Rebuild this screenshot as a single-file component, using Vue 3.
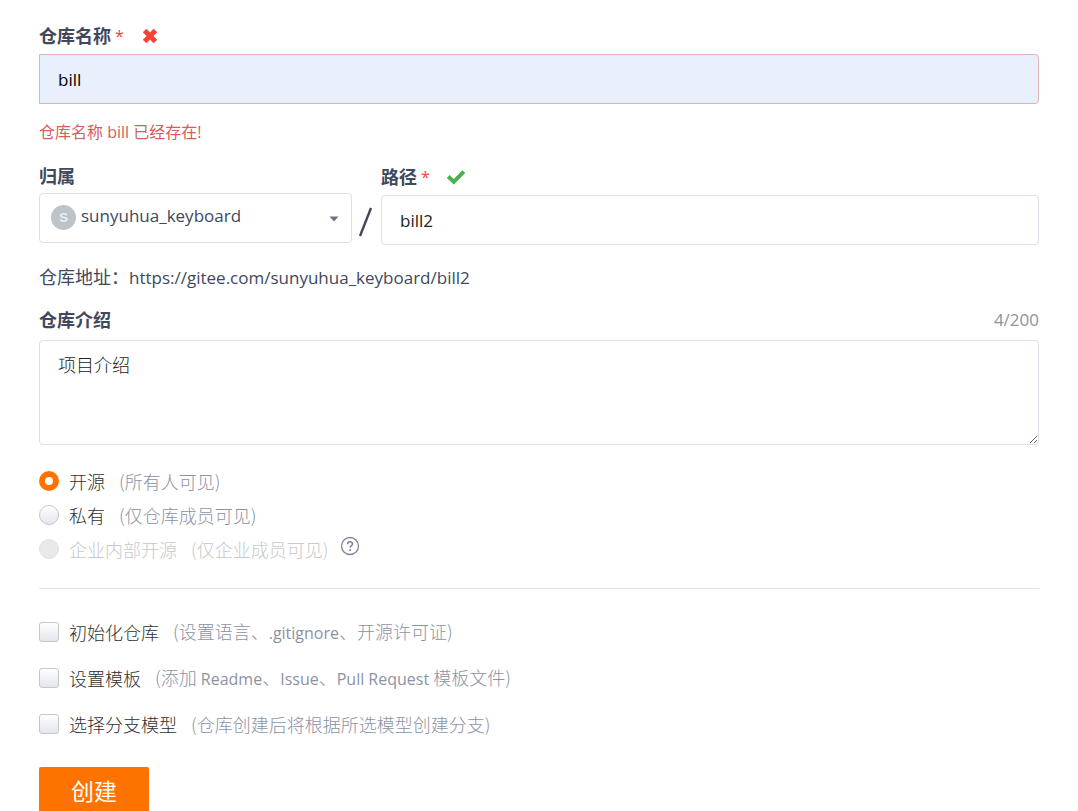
<script setup>
import { ref } from 'vue'

const name = ref('bill')
const owner = ref('sunyuhua_keyboard')
const path = ref('bill2')
const intro = ref('项目介绍')
const visibility = ref('public')
const picked = ref([])

const visibilities = [
  { value: 'public', label: '开源', hint: '(所有人可见)' },
  { value: 'private', label: '私有', hint: '(仅仓库成员可见)' },
  { value: 'inner', label: '企业内部开源', hint: '(仅企业成员可见)', disabled: true, help: true },
]
const options = [
  { value: 'init', label: '初始化仓库', hint: '(设置语言、.gitignore、开源许可证)' },
  { value: 'template', label: '设置模板', hint: '(添加 Readme、Issue、Pull Request 模板文件)' },
  { value: 'branch', label: '选择分支模型', hint: '(仓库创建后将根据所选模型创建分支)' },
]

// Splits a hint into runs so that Latin words can take their own type size.
const runs = (text) => text.split(/([ .A-Za-z]+)/).filter(Boolean)
const isLatin = (run) => /[A-Za-z]/.test(run)
</script>

<template>
  <form class="form" @submit.prevent>
    <div class="label-row">
      <label for="name">仓库名称</label>
      <span class="star">*</span>
      <svg class="status" viewBox="0 0 20 20" aria-hidden="true">
        <path d="M4.6 4.6 L15.4 15.4 M15.4 4.6 L4.6 15.4" stroke="#f44336" stroke-width="5" />
      </svg>
    </div>
    <input id="name" v-model="name" class="field invalid" type="text" />
    <p class="error">仓库名称 bill 已经存在!</p>

    <div class="location">
      <div class="owner">
        <div class="label-row short"><label for="owner">归属</label></div>
        <div class="select-box">
          <select id="owner" v-model="owner" class="field">
            <option>sunyuhua_keyboard</option>
          </select>
          <span class="avatar">S</span>
          <svg class="caret" viewBox="0 0 10 6" aria-hidden="true"><path d="M0.5 0.5H9.5L5 5.5Z" fill="#6b7385" /></svg>
        </div>
      </div>
      <svg class="slash" viewBox="0 0 16 32" aria-hidden="true"><path d="M2 30 L13 2" stroke="#40485b" stroke-width="2.4" /></svg>
      <div class="path">
        <div class="label-row">
          <label for="path">路径</label>
          <span class="star">*</span>
          <svg class="status" viewBox="0 0 20 20" aria-hidden="true">
            <path d="M2.2 9.5 L7.8 14.8 L17.8 4.6" fill="none" stroke="#4caf50" stroke-width="4" />
          </svg>
        </div>
        <input id="path" v-model="path" class="field" type="text" />
      </div>
    </div>

    <p class="address">仓库地址：<span class="url">https://gitee.com/{{ owner }}/{{ path }}</span></p>

    <div class="label-row intro-row">
      <label for="intro">仓库介绍</label>
      <span class="count">{{ intro.length }}/200</span>
    </div>
    <textarea id="intro" v-model="intro" class="field area"></textarea>

    <div class="radios">
      <div v-for="v in visibilities" :key="v.value" class="choice-row">
        <label class="choice" :class="{ disabled: v.disabled }">
          <input v-model="visibility" type="radio" name="visibility" :value="v.value" :disabled="v.disabled" />
          <span class="choice-text">{{ v.label }}</span>
          <span class="hint">{{ v.hint }}</span>
        </label>
        <svg v-if="v.help" class="help" viewBox="0 0 20 20" aria-hidden="true">
          <circle cx="10" cy="10" r="8.5" fill="none" stroke="#7d8597" stroke-width="1.3" />
          <path d="M7.6 8.2C7.6 5 12.5 5.1 12.5 7.9C12.5 9.6 10.1 9.8 10.1 11.8" fill="none" stroke="#7d8597" stroke-width="1.5" />
          <circle cx="10.1" cy="14" r="1" fill="#7d8597" />
        </svg>
      </div>
    </div>

    <hr />

    <div class="checks">
      <label v-for="o in options" :key="o.value" class="choice">
        <input v-model="picked" type="checkbox" :value="o.value" />
        <span class="choice-text">{{ o.label }}</span>
        <span class="hint"><span v-for="(run, i) in runs(o.hint)" :key="i" :class="{ latin: isLatin(run) }">{{ run }}</span></span>
      </label>
    </div>

    <button type="submit">创建</button>
  </form>
</template>

<style>
body {
  margin: 0;
  background: #fff;
}
</style>

<style scoped>
.form,
.form * {
  box-sizing: border-box;
}
.form {
  padding: 20px 39px 0;
  font-family: "Open Sans", "Noto Sans CJK SC", sans-serif;
  font-size: 18px;
  line-height: 24px;
  color: #40485b;
}
.label-row {
  display: flex;
  align-items: center;
  height: 34px;
  padding-bottom: 2px;
}
.label-row.short {
  height: 32px;
}
.label-row label {
  font-weight: 700;
}
.star {
  margin-left: 4px;
  font-size: 16px;
  color: #f44336;
}
.status {
  width: 20px;
  height: 20px;
  margin-left: 16px;
}
.field {
  display: block;
  width: 100%;
  height: 50px;
  margin: 0;
  padding: 0 18px;
  border: 1px solid #dce0e8;
  border-radius: 4px;
  outline: none;
  background: #fff;
  color: #222;
  font-family: inherit;
  font-size: 17px;
  line-height: 24px;
}
.field.invalid {
  border-color: #e0b4b4;
  border-radius: 0 4px 4px 0;
  background: #e8f0fe;
  color: #000;
}
.error {
  margin: 16px 0 17px;
  font-size: 16px;
  color: #d95c5c;
}
.location {
  display: flex;
  align-items: flex-start;
}
.owner {
  flex: 0 0 313px;
}
.select-box {
  position: relative;
}
.select-box .field {
  appearance: none;
  padding: 0 40px 4px 41px;
  color: #40485b;
}
.avatar {
  position: absolute;
  top: 12px;
  left: 12px;
  width: 25px;
  height: 25px;
  border-radius: 50%;
  background: #bdc3c7;
  color: #eceff1;
  font-family: "Liberation Sans", sans-serif;
  font-size: 13px;
  font-weight: 700;
  line-height: 25px;
  text-align: center;
  pointer-events: none;
}
.caret {
  position: absolute;
  top: 23px;
  right: 13px;
  width: 10px;
  height: 6px;
  pointer-events: none;
}
.slash {
  flex: none;
  width: 16px;
  height: 32px;
  margin: 45px 7px 0 6px;
}
.path {
  flex: 1;
}
.address {
  margin: 20px 0 14px;
}
.url {
  font-size: 17px;
}
.intro-row {
  height: 36px;
  padding-bottom: 4px;
  justify-content: space-between;
}
.count {
  font-size: 17px;
  color: #8c92a4;
}
.area {
  height: 105px;
  padding: 12px 18px;
  font-size: 18px;
  font-weight: 300;
  resize: vertical;
}
.radios {
  margin-top: 19px;
}
.choice-row {
  display: flex;
  height: 34px;
}
.choice {
  display: flex;
  align-items: center;
  height: 34px;
  font-family: "Noto Sans CJK SC", sans-serif;
  font-weight: 300;
}
.choice input {
  appearance: none;
  flex: none;
  width: 20px;
  height: 20px;
  margin: 0 10px 0 0;
  border: 1px solid #c4c7ce;
  border-radius: 3px;
  background: linear-gradient(#fff, #e4e6ec);
}
.choice input[type="radio"] {
  border-radius: 50%;
}
.choice input[type="radio"]:checked {
  border: 6px solid #fe7300;
  background: #fff;
}
.choice input:disabled {
  border-color: #e2e2e2;
  background: #e9e9e9;
}
.choice input[type="checkbox"]:checked {
  background: #fe7300;
}
.choice-text {
  color: #303030;
}
.hint {
  margin-left: 14px;
  color: #8c92a4;
  white-space: pre;
}
.latin {
  font-family: "Open Sans", sans-serif;
  font-size: 16px;
  font-weight: 400;
}
.choice.disabled .choice-text,
.choice.disabled .hint {
  color: #c8c8c8;
}
.help {
  width: 20px;
  height: 20px;
  margin: 4px 0 0 12px;
}
hr {
  height: 1px;
  margin: 22px 0;
  border: 0;
  background: #dce3e8;
}
.checks {
  display: grid;
  gap: 12px;
  margin-top: 26px;
}
button {
  display: block;
  width: 110px;
  height: 48px;
  margin-top: 26px;
  padding: 0;
  border: 0;
  border-radius: 2px;
  background: #fe7300;
  color: #fff;
  font-family: inherit;
  font-size: 23px;
  line-height: 48px;
}
</style>
